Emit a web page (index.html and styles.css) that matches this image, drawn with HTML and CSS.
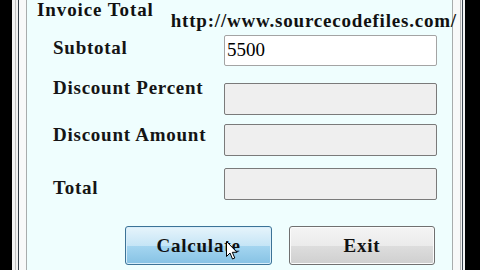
FILE: index.html
```html
<!DOCTYPE html>
<html lang="en">
<head>
    <meta charset="UTF-8">
    <title>Invoice Total</title>
    <link rel="stylesheet" href="styles.css">
</head>
<body>
    <div class="window">
        <div class="frame">
            <div class="client">
                <div class="group">
                    <div class="group-head">
                        <div class="legend">Invoice Total</div>
                        <div class="url">http://www.sourcecodefiles.com/</div>
                    </div>

                    <div class="fields">
                        <div class="label label-subtotal">Subtotal</div>
                        <div class="box box-input">5500</div>

                        <div class="label label-percent">Discount Percent</div>
                        <div class="box"></div>

                        <div class="label label-amount">Discount Amount</div>
                        <div class="box"></div>

                        <div class="label label-total">Total</div>
                        <div class="box"></div>
                    </div>

                    <div class="buttons">
                        <button class="btn btn-calc">Calculate
                            <svg class="cursor" width="12" height="19" viewBox="0 0 12 19">
                                <path d="M0.5 0.5 L0.5 15.5 L4 12 L6.5 18 L8.8 17 L6.3 11.3 L11 11.3 Z" fill="#fff" stroke="#000" stroke-width="1" stroke-linejoin="round"/>
                            </svg>
                        </button>
                        <button class="btn btn-exit">Exit</button>
                    </div>
                </div>
            </div>
        </div>
    </div>
</body>
</html>
```

FILE: styles.css
```css
* {
    margin: 0;
    padding: 0;
    box-sizing: border-box;
}

body {
    width: 480px;
    height: 270px;
    background-color: #000;
    overflow: hidden;
    font-family: "Liberation Serif", "DejaVu Serif", serif;
}

/* window chrome, left to right */
.window {
    margin-left: 12px;
    width: 453px;
    height: 270px;
    padding: 0 2px 0 3px;
    background-color: #f3f3f3;
}

.frame {
    height: 100%;
    border-left: 1px solid #c4c4c4;
    border-right: 1px solid #3c4650;
    padding: 0 1px 0 2px;
}

.client {
    height: 100%;
    border-left: 1px solid #36404a;
    border-right: 1px solid #b4b4b4;
    background-color: #f8f9f9;
    padding: 0 7px;
}

.group {
    position: relative;
    height: 100%;
    border-left: 1px solid #a8acac;
    border-right: 1px solid #a8acac;
    background-color: #effefe;
}

.group-head {
    display: flex;
    align-items: flex-start;
    height: 35px;
    white-space: nowrap;
}

.legend {
    margin-left: 10px;
    font-size: 19px;
    font-weight: bold;
    letter-spacing: 0.9px;
    line-height: 20px;
    color: #111;
}

.url {
    margin: 11px 0 0 17px;
    font-size: 19px;
    font-weight: bold;
    letter-spacing: 0.8px;
    line-height: 20px;
    color: #111;
}

.fields {
    display: grid;
    grid-template-columns: 171px 213px;
    grid-template-rows: 48px 41px 44px 58px;
    padding-left: 26px;
}

.label {
    font-size: 19px;
    font-weight: bold;
    letter-spacing: 0.75px;
    line-height: 20px;
    white-space: nowrap;
    color: #151515;
}

.label-subtotal { padding-top: 3px; }
.label-percent { margin-top: -5px; }
.label-amount { padding-top: 1px; }
.label-total { padding-top: 10px; }

.box {
    height: 32px;
    border: 1px solid #7a7a7a;
    border-radius: 2px;
    background-color: #efefef;
}

.box-input {
    height: 31px;
    border-color: #a4a4a4;
    background-color: #fff;
    padding: 3px 0 0 2px;
    font-size: 19px;
    color: #000;
}

.buttons {
    display: flex;
    gap: 17px;
    padding-left: 98px;
}

.btn {
    position: relative;
    width: 147px;
    height: 39px;
    border-radius: 3px;
    font-family: "Liberation Serif", "DejaVu Serif", serif;
    font-size: 19px;
    font-weight: bold;
    letter-spacing: 0.8px;
    color: #111;
}

.btn-calc {
    border: 1px solid #3c7397;
    background: linear-gradient(#e6f4fb 0%, #c6e5f6 50%, #a4d5f0 52%, #86c2e4 100%);
    box-shadow: inset 0 0 0 1px #d8eefa;
}

.btn-exit {
    width: 146px;
    border: 1px solid #707070;
    background: linear-gradient(#f4f4f4 0%, #ebebeb 50%, #dddddd 52%, #cfcfcf 100%);
    box-shadow: inset 0 0 0 1px #fbfbfb;
}

.cursor {
    position: absolute;
    left: 100px;
    top: 14px;
}
```
